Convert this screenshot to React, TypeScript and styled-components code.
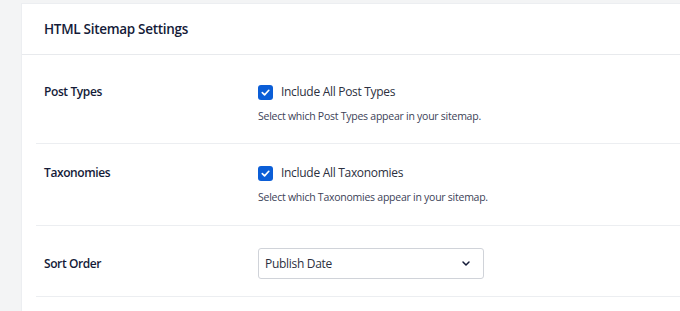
import React from "react";
import styled, { createGlobalStyle } from "styled-components";

const Global = createGlobalStyle`
  html, body { margin: 0; padding: 0; background: #f3f4f5; }
  body { font-family: "Open Sans", "Noto Sans", sans-serif; color: #141b38; }
`;

const Page = styled.div`
  padding: 3px 0 0 21px;
  height: 311px;
  box-sizing: border-box;
  overflow: hidden;
`;

const Card = styled.div`
  background: #fff;
  border-top: 1px solid #eceef1;
  border-left: 1px solid #eceef1;
  min-height: 320px;
`;

const Header = styled.div`
  height: 50px;
  display: flex;
  align-items: center;
  padding-left: 22px;
  border-bottom: 1px solid #e8eaed;
`;

const Title = styled.h2`
  margin: 0;
  font-size: 13.5px;
  letter-spacing: -0.3px;
  font-weight: 600;
  color: #141b38;
`;

const Body = styled.div`
  padding-left: 14px;
`;

const Row = styled.div<{ $h: number }>`
  height: ${(p) => p.$h}px;
  display: grid;
  grid-template-columns: 222px 1fr;
  align-items: start;
  border-bottom: 1px solid #eceef1;
  box-sizing: border-box;
`;

const Label = styled.div<{ $top?: number }>`
  padding-left: 8px;
  padding-top: ${(p) => p.$top ?? 0}px;
  font-size: 12px;
  letter-spacing: -0.4px;
  line-height: 16px;
  font-weight: 600;
  color: #141b38;
`;

const Field = styled.div<{ $top?: number }>`
  padding-top: ${(p) => p.$top ?? 0}px;
  display: flex;
  flex-direction: column;
`;

const CheckLine = styled.label`
  display: flex;
  align-items: center;
  gap: 8px;
  font-size: 12px;
  letter-spacing: -0.3px;
  line-height: 16px;
  color: #2c3040;
`;

const Box = styled.span`
  width: 15px;
  height: 15px;
  border-radius: 3px;
  background: #0b5ed7;
  display: inline-flex;
  align-items: center;
  justify-content: center;
`;

const Desc = styled.div`
  margin-top: 9px;
  font-size: 10.5px;
  letter-spacing: -0.25px;
  line-height: 14px;
  color: #3c4257;
`;

const Select = styled.div`
  width: 226px;
  height: 31px;
  box-sizing: border-box;
  border: 1px solid #d0d3d9;
  border-radius: 3px;
  display: flex;
  align-items: center;
  justify-content: space-between;
  padding: 0 12px 0 6px;
  font-size: 12px;
  letter-spacing: -0.3px;
  color: #2c3040;
`;

const Check = () => (
  <Box>
    <svg width="11" height="11" viewBox="0 0 12 12">
      <path d="M2.5 6.2 L5 8.6 L9.6 3.6" fill="none" stroke="#fff" strokeWidth="1.8" strokeLinecap="round" strokeLinejoin="round" />
    </svg>
  </Box>
);

const Chevron = () => (
  <svg width="10" height="7" viewBox="0 0 10 7">
    <path d="M2 2 L5 5 L8 2" fill="none" stroke="#141b38" strokeWidth="1.5" strokeLinecap="round" strokeLinejoin="round" />
  </svg>
);

export default function App() {
  return (
    <>
      <Global />
      <Page>
        <Card>
          <Header>
            <Title>HTML Sitemap Settings</Title>
          </Header>
          <Body>
            <Row $h={89}>
              <Label $top={29}>Post Types</Label>
              <Field $top={29}>
                <CheckLine>
                  <Check />
                  Include All Post Types
                </CheckLine>
                <Desc>Select which Post Types appear in your sitemap.</Desc>
              </Field>
            </Row>
            <Row $h={82}>
              <Label $top={21}>Taxonomies</Label>
              <Field $top={21}>
                <CheckLine>
                  <Check />
                  Include All Taxonomies
                </CheckLine>
                <Desc>Select which Taxonomies appear in your sitemap.</Desc>
              </Field>
            </Row>
            <Row $h={71}>
              <Label $top={30}>Sort Order</Label>
              <Field $top={22}>
                <Select>
                  Publish Date
                  <Chevron />
                </Select>
              </Field>
            </Row>
          </Body>
        </Card>
      </Page>
    </>
  );
}
